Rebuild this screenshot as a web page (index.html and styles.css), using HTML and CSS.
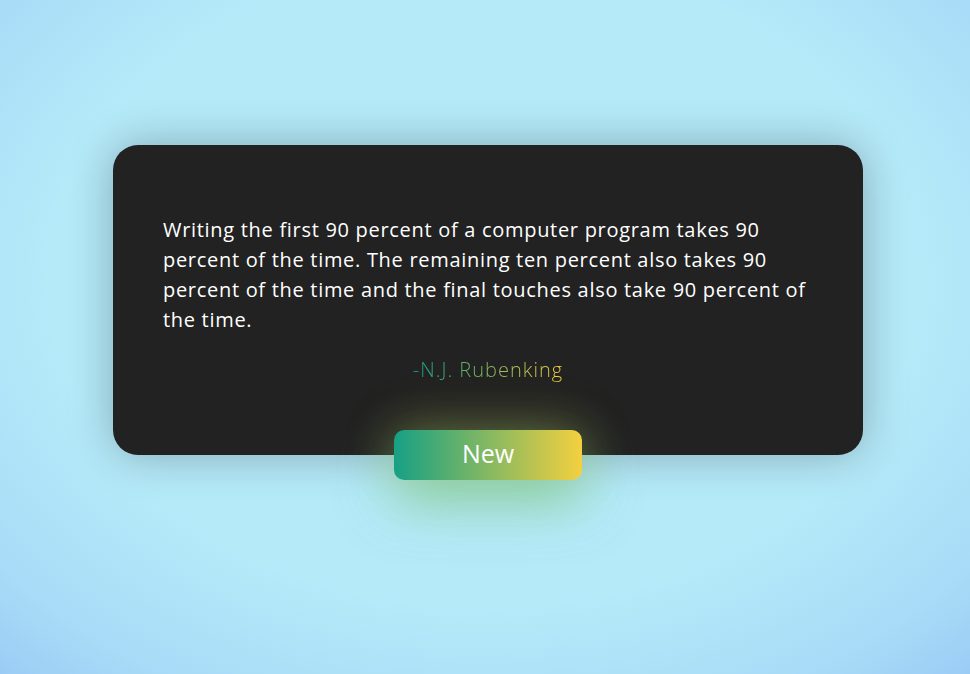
FILE: index.html
```html
<!DOCTYPE html>
<html lang="en">
<head>
<meta charset="utf-8">
<title>Quote</title>
<link rel="stylesheet" href="styles.css">
</head>
<body>
<main class="stage">
  <section class="card">
    <p class="quote">Writing the first 90 percent of a computer program takes 90 percent of the time. The remaining ten percent also takes 90 percent of the time and the final touches also take 90 percent of the time.</p>
    <p class="author"><span class="author-text">-N.J. Rubenking</span></p>
    <button class="new-btn" type="button">New</button>
  </section>
</main>
</body>
</html>
```
FILE: styles.css
```css
html, body {
  margin: 0;
  padding: 0;
  height: 100%;
}
body {
  background: radial-gradient(ellipse 75% 80% at 50% 42%, #b5eaf9 0%, #b5eaf9 60%, #a8dbf7 85%, #9acaf5 100%);
  font-family: "Open Sans", "Liberation Sans", sans-serif;
  overflow: hidden;
}
.stage {
  display: flex;
  justify-content: center;
  padding-top: 145px;
  padding-left: 6px;
}
.card {
  position: relative;
  box-sizing: border-box;
  width: 750px;
  height: 310px;
  background: #222222;
  border-radius: 25px;
  padding: 70px 50px 0;
  box-shadow: 0 0 45px rgba(0, 0, 0, 0.28);
}
.quote {
  margin: 0;
  color: #ffffff;
  font-size: 20px;
  line-height: 30px;
  font-weight: 500;
  letter-spacing: 0.7px;
}
.author {
  margin: 20px 0 0;
  text-align: center;
  font-size: 20px;
  line-height: 30px;
  font-weight: 300;
  letter-spacing: 1px;
}
.author-text {
  background: linear-gradient(90deg, #16a085, #f4d03f);
  -webkit-background-clip: text;
  background-clip: text;
  color: transparent;
}
.new-btn {
  position: absolute;
  left: 50%;
  bottom: -25px;
  transform: translateX(-50%);
  width: 188px;
  height: 50px;
  border: none;
  border-radius: 10px;
  background: linear-gradient(90deg, #16a085, #f4d03f);
  color: #ffffff;
  font-family: "Open Sans", "Liberation Sans", sans-serif;
  font-size: 25px;
  font-weight: 500;
  line-height: 44px;
  padding: 0 0 4px;
  cursor: pointer;
  box-shadow: 0 20px 55px rgba(110, 190, 110, 0.7), 0 -5px 50px rgba(230, 210, 80, 0.25);
}
```
